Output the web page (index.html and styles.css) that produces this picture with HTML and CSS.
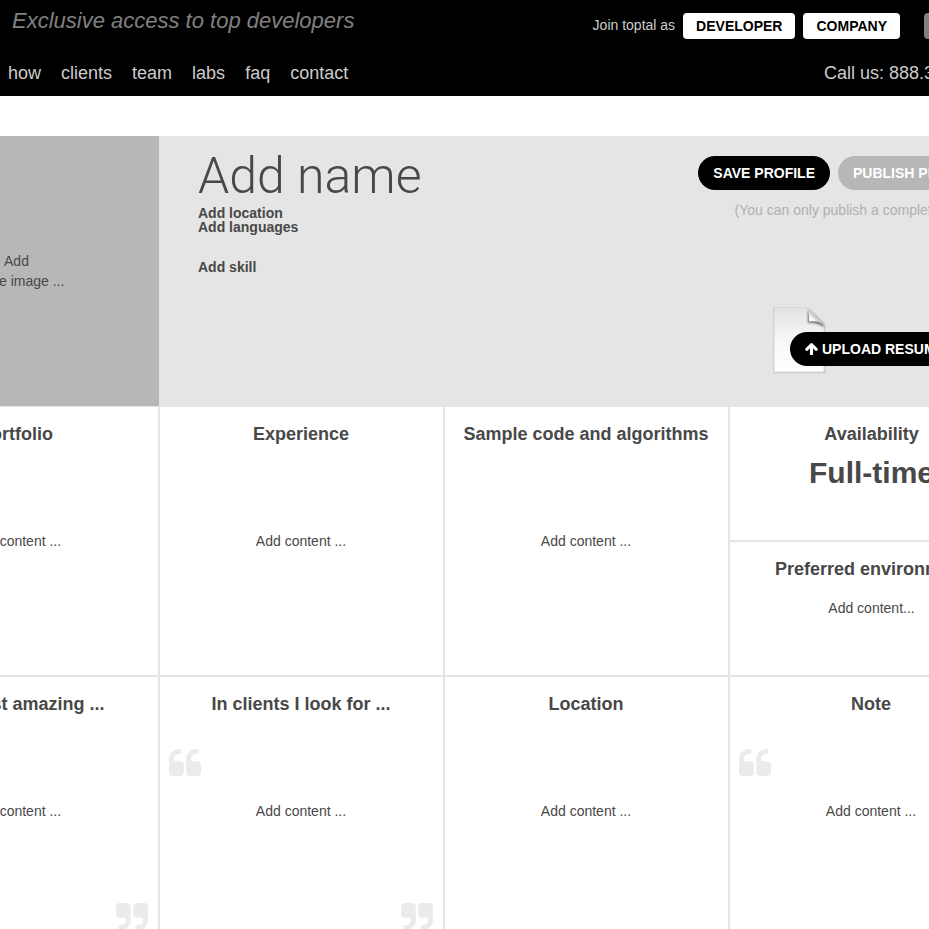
FILE: index.html
```html
<!DOCTYPE html>
<html lang="en">
<head>
<meta charset="utf-8">
<title>Developer profile</title>
<link rel="stylesheet" href="styles.css">
</head>
<body>
<svg class="defs" aria-hidden="true">
  <symbol id="quote" viewBox="64 128 1664 1408"><path d="M832 960v384q0 80-56 136t-136 56h-384q-80 0-136-56t-56-136v-704q0-104 40.5-198.5t109.5-163.5 163.5-109.5 198.5-40.5h64q26 0 45 19t19 45v128q0 26-19 45t-45 19h-64q-106 0-181 75t-75 181v32q0 40 28 68t68 28h224q80 0 136 56t56 136zm896 0v384q0 80-56 136t-136 56h-384q-80 0-136-56t-56-136v-704q0-104 40.5-198.5t109.5-163.5 163.5-109.5 198.5-40.5h64q26 0 45 19t19 45v128q0 26-19 45t-45 19h-64q-106 0-181 75t-75 181v32q0 40 28 68t68 28h224q80 0 136 56t56 136z"/></symbol>
</svg>
<header class="header">
  <div class="header-row header-top">
    <p class="tagline">Exclusive access to top developers</p>
    <div class="join">
      <span class="join-label">Join toptal as</span>
      <button class="btn" type="button">DEVELOPER</button>
      <button class="btn" type="button">COMPANY</button>
      <button class="btn btn-login" type="button">LOGIN</button>
    </div>
  </div>
  <div class="header-row">
    <nav class="nav">
      <a href="#">how</a>
      <a href="#">clients</a>
      <a href="#">team</a>
      <a href="#">labs</a>
      <a href="#">faq</a>
      <a href="#">contact</a>
    </nav>
    <p class="phone">Call us: 888.3</p>
  </div>
</header>
<main class="profile">
  <section class="hero">
    <div class="photo">Add<br>profile image ...</div>
    <div class="identity">
      <h1 class="name">Add name</h1>
      <p class="meta">Add location</p>
      <p class="meta">Add languages</p>
      <p class="meta skill">Add skill</p>
    </div>
    <div class="actions">
      <div class="action-row">
        <button class="pill" type="button">SAVE PROFILE</button>
        <button class="pill pill-off" type="button">PUBLISH PROFILE</button>
      </div>
      <p class="note">(You can only publish a completed profile)</p>
      <div class="resume">
        <svg class="sheet" viewBox="0 0 54 70" aria-hidden="true">
          <defs>
            <linearGradient id="paper" x1="0" y1="0" x2="0" y2="1"><stop offset="0" stop-color="#e2e2e2"/><stop offset="0.5" stop-color="#f7f7f7"/><stop offset="1" stop-color="#fff"/></linearGradient>
            <linearGradient id="fold" x1="0" y1="1" x2="1" y2="0"><stop offset="0" stop-color="#fff"/><stop offset="0.35" stop-color="#fafafa"/><stop offset="0.55" stop-color="#bbb"/></linearGradient>
            <filter id="soft" x="-50%" y="-50%" width="200%" height="200%"><feGaussianBlur stdDeviation="1.2"/></filter>
          </defs>
          <path d="M2 3H33Q40 4 52.500 20V67.500H2Z" fill="none" stroke="#c4c4c4" stroke-width="1.5"/>
          <path d="M2 2.500H33Q40 3 52 19.500V67H2Z" fill="url(#paper)" stroke="#d8d8d8" stroke-width="1"/>
          <path d="M36 6V18Q45 17 51 22L52 20L37 6Z" fill="#666" filter="url(#soft)"/>
          <path d="M34 3Q37.500 6 37 16.500Q46 15 51 19.500Q44 9 34 3Z" fill="url(#fold)"/>
        </svg>
        <button class="pill upload" type="button"><svg class="arrow" viewBox="117 191 1558 1473" aria-hidden="true"><path d="M1675 971q0 51-37 90l-75 75q-38 38-91 38-54 0-90-38l-294-293v704q0 52-37.500 84.500t-90.500 32.500h-128q-53 0-90.500-32.500t-37.500-84.500v-704l-294 293q-36 38-90 38t-90-38l-75-75q-38-38-38-90 0-53 38-91l651-651q35-37 90-37 54 0 91 37l651 651q37 39 37 91z"/></svg>UPLOAD RESUME</button>
      </div>
    </div>
  </section>
  <section class="cards">
    <article class="card"><h2>Portfolio</h2><p>Add content ...</p></article>
    <article class="card"><h2>Experience</h2><p>Add content ...</p></article>
    <article class="card"><h2>Sample code and algorithms</h2><p>Add content ...</p></article>
    <div class="split">
      <article class="half"><h2>Availability</h2><p class="status">Full-time</p></article>
      <article class="half"><h2>Preferred environment</h2><p class="environment">Add content...</p></article>
    </div>
    <article class="card">
      <div><h2>The most amazing ...</h2><svg class="quote" aria-hidden="true"><use href="#quote"/></svg></div>
      <p>Add content ...</p>
      <svg class="quote quote-end" aria-hidden="true"><use href="#quote"/></svg>
    </article>
    <article class="card">
      <div><h2>In clients I look for ...</h2><svg class="quote" aria-hidden="true"><use href="#quote"/></svg></div>
      <p>Add content ...</p>
      <svg class="quote quote-end" aria-hidden="true"><use href="#quote"/></svg>
    </article>
    <article class="card"><h2>Location</h2><p>Add content ...</p></article>
    <article class="card">
      <div><h2>Note</h2><svg class="quote" aria-hidden="true"><use href="#quote"/></svg></div>
      <p>Add content ...</p>
      <svg class="quote quote-end" aria-hidden="true"><use href="#quote"/></svg>
    </article>
  </section>
</main>
</body>
</html>
```
FILE: styles.css
```css
* { box-sizing: border-box; }
body {
  margin: 0;
  overflow-x: hidden;
  background: #fff;
  color: #484848;
  font: 14px/20px "Liberation Sans", Arial, sans-serif;
}
h1, h2, p { margin: 0; }
button { font: inherit; font-weight: bold; border: 0; cursor: pointer; }
.defs { display: none; }

.header {
  margin-right: -85px;
  padding-bottom: 12px;
  background: #000;
  color: #ccc;
}
.header-row { display: flex; justify-content: space-between; padding-left: 8px; font-size: 18px; line-height: 22px; }
.header-top { height: 62px; padding-left: 12px; }
.tagline { padding-top: 8px; color: #808080; font-size: 22px; line-height: 26px; font-style: italic; }
.join { display: flex; align-items: flex-start; gap: 8px; padding-top: 13px; font-size: 14px; }
.join-label { line-height: 24px; }
.btn { height: 26px; padding: 0 13px; border-radius: 4px; background: #fff; color: #000; }
.btn-login { width: 90px; margin-left: 16px; background: #808080; }
.nav { display: flex; gap: 20px; }
.nav a { color: inherit; text-decoration: none; }
.phone { width: 190px; }

/* The board is wider than the window and bleeds off both sides. */
.profile { margin: 40px -85px 0 -126px; }
.hero { display: grid; grid-template-columns: minmax(0, 1fr) minmax(0, 2fr) minmax(0, 1fr); height: 270px; background: #e5e5e5; }
.photo { display: flex; align-items: center; justify-content: center; background: #b7b7b7; text-align: center; }
.identity { padding: 13px 0 0 39px; }
.name { margin-bottom: 3px; font: 300 50px/54px Roboto, sans-serif; }
.meta { font-weight: bold; line-height: 14px; }
.skill { margin-top: 26px; }
.actions { display: flex; flex-direction: column; align-items: flex-end; padding: 20px 20px 0 0; white-space: nowrap; }
.action-row { display: flex; gap: 8px; }
.pill { height: 34px; padding: 0 15px; border-radius: 17px; background: #000; color: #fff; white-space: nowrap; }
.pill-off { background: #b7b7b7; }
.note { margin-top: 10px; color: #b0b0b0; }
.resume { display: flex; align-items: flex-end; width: 222px; height: 70px; margin-top: 85px; }
.sheet { width: 54px; height: 70px; flex: none; }
.upload { display: flex; align-items: center; gap: 4px; margin: 0 0 9px -36px; z-index: 1; }
.arrow { width: 13px; height: 12px; fill: #fff; }

.cards { display: grid; grid-template-columns: repeat(4, minmax(0, 1fr)); grid-auto-rows: 270px; text-align: center; }
.card { display: grid; grid-template-rows: 1fr 21px 1fr; padding: 16px 10px 15px 9px; border: 1px solid #e5e5e5; }
.card h2, .half h2 { font-size: 18px; line-height: 22px; }
.quote { display: block; width: 32px; height: 27px; margin-top: 34px; fill: #ebebeb; }
.quote-end { align-self: end; justify-self: end; transform: rotate(180deg); }
.split { display: grid; grid-template-rows: 1fr 1fr; }
.half { padding-top: 16px; border: 1px solid #e5e5e5; }
.status { margin-top: 10px; font-size: 30px; line-height: 36px; font-weight: bold; }
.environment { margin-top: 18px; }
```
